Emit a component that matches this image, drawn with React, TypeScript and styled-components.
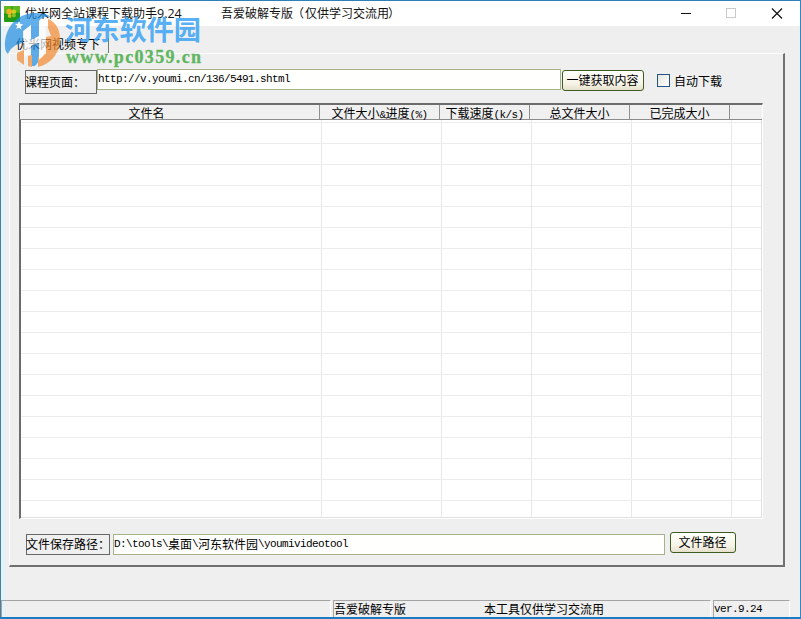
import React from "react";
import styled, { createGlobalStyle } from "styled-components";

const GlobalStyle = createGlobalStyle`
  * { box-sizing: border-box; }
  body { margin: 0; overflow: hidden; }
`;

const cjk = `"Noto Sans CJK SC", sans-serif`;

const Window = styled.div`
  position: relative;
  display: flex;
  flex-direction: column;
  width: 801px;
  height: 619px;
  background: #efefef;
  border: 1px solid #2f7fb8;
  border-left-color: #4a7f9c;
  border-right-color: #3087ca;
  border-bottom: 2px solid #1a7cc4;
  color: #000;
  font: 12px/16px ${cjk};
  white-space: pre;
`;

const TitleBar = styled.header`
  display: flex;
  align-items: center;
  flex: none;
  height: 25px;
  padding-left: 3px;
  background: #fff;
`;

const AppIcon = styled.svg`
  flex: none;
  width: 16px;
  height: 16px;
  margin-right: 5px;
`;

const Title = styled.h1<{ $width?: number }>`
  width: ${(p) => (p.$width ? `${p.$width}px` : "auto")};
  margin: 0;
  padding-bottom: 1px;
  font: inherit;
  color: #111;
`;

const Version = styled.span`
  font: 12.5px/16px "Open Sans", sans-serif;
`;

const Paren = styled.span<{ $shift: number }>`
  position: relative;
  left: ${(p) => p.$shift}px;
`;

const Controls = styled.div`
  display: flex;
  margin-left: auto;
`;

const Control = styled.button`
  display: grid;
  place-items: center;
  width: 46px;
  height: 25px;
  padding: 0;
  border: 0;
  background: none;
`;

const Body = styled.main`
  display: flex;
  flex-direction: column;
  flex: 1;
  min-height: 0;
  border-left: 4px solid #e4f2fa;
`;

const Tab = styled.div`
  flex: none;
  width: 98px;
  height: 15px;
  margin: 12px 0 0 6px;
  padding-left: 5px;
  border-right: 1px solid #777;
  line-height: 11px;
`;

const Panel = styled.section`
  display: flex;
  flex-direction: column;
  flex: none;
  width: 776px;
  height: 514px;
  margin-left: 4px;
  padding: 15px 0 0 9px;
  border: 1px solid #fff;
  border-right: 2px solid #707070;
  border-bottom: 2px solid #707070;
`;

const Row = styled.div<{ $top?: number; $left: number }>`
  display: flex;
  align-items: flex-start;
  flex: none;
  margin-top: ${(p) => p.$top ?? 0}px;
  margin-left: ${(p) => p.$left}px;
`;

const FieldLabel = styled.label<{ $width: number; $height: number; $top?: number }>`
  width: ${(p) => p.$width}px;
  height: ${(p) => p.$height}px;
  margin-top: ${(p) => p.$top ?? 0}px;
  border: 1px solid #686868;
  line-height: ${(p) => p.$height - 3}px;
  text-indent: -1px;
`;

const Field = styled.div<{ $width: number; $left?: number; $top?: number }>`
  display: flex;
  align-items: center;
  width: ${(p) => p.$width}px;
  height: 21px;
  margin-left: ${(p) => p.$left ?? 0}px;
  margin-top: ${(p) => p.$top ?? 0}px;
  padding: 0 0 1px 0;
  border: 1px solid #a5b28b;
  background: #fffffd;
`;

const Latin = styled.span`
  font: 11px/16px "Liberation Mono", monospace;
  letter-spacing: -0.6px;
`;

const PushButton = styled.button<{ $width: number; $left: number; $top?: number }>`
  width: ${(p) => p.$width}px;
  height: 21px;
  margin: ${(p) => p.$top ?? 0}px 0 0 ${(p) => p.$left}px;
  padding: 0 1px 1px 0;
  border: 1px solid #3c5c20;
  border-radius: 3px;
  background: linear-gradient(#fffffc, #f6f4e8 65%, #e6e0cc);
  color: #000;
  font: 12px/18px ${cjk};
`;

const CheckBox = styled.span`
  width: 13px;
  height: 13px;
  margin: 5px 4px 0 13px;
  border: 1px solid #245385;
  background: linear-gradient(135deg, #e4e4df, #fff);
`;

const CheckText = styled.span`
  margin-top: 4px;
`;

const columns = "300px 120px 90px 100px 100px 1fr";

const Table = styled.div`
  display: flex;
  flex-direction: column;
  width: 744px;
  height: 416px;
  margin-top: 9px;
  border: 2px solid #6c6c6c;
  border-right: 1px solid #fff;
  border-bottom: 1px solid #fff;
  background: #fff;
`;

const HeadRow = styled.div`
  display: grid;
  grid-template-columns: ${columns};
  grid-template-rows: 14px;
  flex: none;
  height: 15px;
  margin-left: -2px;
  border-left: 1px solid #6c6c6c;
  border-bottom: 1px solid #8c8c8c;
  background: #f0f0f0;
`;

const HeadCell = styled.div<{ $end?: number }>`
  height: 14px;
  padding-right: ${(p) => p.$end ?? 0}px;
  border-right: 1px solid #8f8f8f;
  text-align: center;
  line-height: 15px;
  &:last-child { border-right: 0; }
`;

const Grid = styled.div`
  flex: 1;
  min-height: 0;
  overflow: hidden;
  border-right: 1px solid #e0e0e0;
  border-bottom: 1px solid #e0e0e0;
`;

const GridRow = styled.div`
  display: grid;
  grid-template-columns: 301px 120px 90px 100px 100px 1fr;
  height: 21px;
  border-bottom: 1px solid #ececec;
  &:first-child { height: 3px; }
`;

const GridCell = styled.div`
  border-right: 1px solid #e8e8e8;
  &:last-child { border-right: 0; }
`;

const StatusBar = styled.footer`
  display: flex;
  gap: 2px;
  flex: none;
  height: 17px;
  margin: auto 9px 0 -4px;
`;

const StatusPane = styled.div<{ $width: number }>`
  display: flex;
  width: ${(p) => p.$width}px;
  height: 17px;
  border: 1px solid #a4a4a4;
  border-right-color: #fff;
  border-bottom: 0;
  line-height: 16px;
`;

const StatusText = styled.span<{ $width: number }>`
  width: ${(p) => p.$width}px;
`;

const Watermark = styled.svg`
  position: absolute;
  left: -1px;
  top: -1px;
  width: 210px;
  height: 75px;
  pointer-events: none;
`;

const headers: [React.ReactNode, number][] = [
  ["文件名", 46],
  [<>文件大小<Latin>&amp;</Latin>进度<Latin>(%)</Latin></>, 0],
  [<>下载速度<Latin>(k/s)</Latin></>, 0],
  ["总文件大小", 0],
  ["已完成大小", 0],
  ["", 0],
];

export default function App() {
  return (
    <>
      <GlobalStyle />
      <Window>
        <TitleBar>
          <AppIcon viewBox="0 0 17 17">
            <rect width="17" height="17" rx="1" fill="#239b18" />
            <path d="M0 0h8v8H0zM9 0h8v7H9z" fill="#5db91f" />
            <circle cx="5.5" cy="6" r="3" fill="#f2b022" />
            <circle cx="10.5" cy="6" r="2.4" fill="#d4cc22" />
            <circle cx="6" cy="10.5" r="2" fill="#c9c722" />
            <circle cx="10.5" cy="10" r="2" fill="#8cc425" />
          </AppIcon>
          <Title $width={196}>优米网全站课程下载助手<Version>9.24</Version></Title>
          <Title as="span">
            吾爱破解专版<Paren $shift={-1}>（</Paren>仅供学习交流用<Paren $shift={-1}>）</Paren>
          </Title>
          <Controls>
            <Control aria-label="minimize">
              <svg width="11" height="11"><path d="M1 5.5h10" stroke="#111" /></svg>
            </Control>
            <Control aria-label="maximize">
              <svg width="11" height="11"><rect x="0.5" y="0.5" width="9" height="9" fill="none" stroke="#cacaca" /></svg>
            </Control>
            <Control aria-label="close">
              <svg width="12" height="12"><path d="M1 0.5l10 10M11 0.5L1 10.5" stroke="#111" strokeWidth="1.2" /></svg>
            </Control>
          </Controls>
        </TitleBar>
        <Body>
          <Tab>优米网视频专下</Tab>
          <Panel>
            <Row $left={6}>
              <FieldLabel $width={72} $height={24} $top={1}>课程页面：</FieldLabel>
              <Field $width={464}><Latin>http://v.youmi.cn/136/5491.shtml</Latin></Field>
              <PushButton $width={82} $left={1} $top={1}>一键获取内容</PushButton>
              <CheckBox />
              <CheckText>自动下载</CheckText>
            </Row>
            <Table>
              <HeadRow>
                {headers.map(([text, end], i) => (
                  <HeadCell key={i} $end={end}>{text}</HeadCell>
                ))}
              </HeadRow>
              <Grid>
                {Array.from({ length: 20 }, (_, r) => (
                  <GridRow key={r}>
                    {headers.map((_h, c) => <GridCell key={c} />)}
                  </GridRow>
                ))}
              </Grid>
            </Table>
            <Row $left={7} $top={13}>
              <FieldLabel $width={84} $height={21} $top={2}>文件保存路径：</FieldLabel>
              <Field $width={552} $left={3} $top={2}>
                <Latin>D:\tools\</Latin>桌面<Latin>\</Latin>河东软件园<Latin>\youmivideotool</Latin>
              </Field>
              <PushButton $width={66} $left={5}>文件路径</PushButton>
            </Row>
          </Panel>
          <StatusBar>
            <StatusPane $width={330} />
            <StatusPane $width={378}>
              <StatusText $width={150}>吾爱破解专版</StatusText>
              <span>本工具仅供学习交流用</span>
            </StatusPane>
            <StatusPane $width={77}><Latin>ver.9.24</Latin></StatusPane>
          </StatusBar>
        </Body>
        <Watermark viewBox="0 0 210 75">
          <g opacity="0.7">
            <path d="M5 47C4 27 18 13 35 13C42 13 47 14 51 17C45 16 41 18 39 21L39 37L31 40V25L23 31V43C16 44 10 48 8 54C6 52 5 50 5 47Z" fill="#1f8fe4" />
            <path d="M31 45L39 41V61L35 66H31Z" fill="#1f8fe4" />
            <path d="M48 19C56 22 60 30 60 39C60 53 51 64 38 67V57L46 53V37L51 36L48 28Z" fill="#f28a2e" />
            <path d="M17 53L24 50V65L17 60ZM28 56L32 55V67L28 66Z" fill="#f28a2e" />
            <path d="M24 31L31 25V40L39 36V23L46 28V53L39 60V43L31 46V54L24 57Z" fill="#fff" />
            <path d="M19 21l1.3 3 3 .5-2.4 1.8.5 3.2-2.4-1.8-2.8 1.3 1-3-2-2 2.8-.2z" fill="#fff" />
          </g>
          <text x="65" y="40" textLength="136" lengthAdjust="spacingAndGlyphs" fill="#42a5f4" fillOpacity="0.9" fontFamily="Noto Sans CJK SC, sans-serif" fontSize="27" fontWeight="700">河东软件园</text>
          <text x="66" y="63" textLength="135" lengthAdjust="spacing" fill="#5fb660" stroke="#5fb660" strokeWidth="0.3" fontFamily="Liberation Serif, serif" fontSize="18" fontWeight="700">www.pc0359.cn</text>
        </Watermark>
      </Window>
    </>
  );
}
